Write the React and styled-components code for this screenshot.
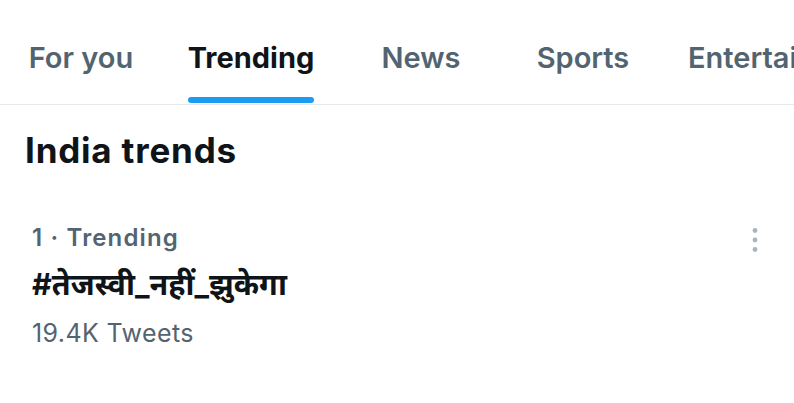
import styled, { createGlobalStyle } from 'styled-components'

const GlobalStyle = createGlobalStyle`
  * { box-sizing: border-box; }
  html, body {
    margin: 0;
    padding: 0;
    background: #ffffff;
    font-family: Inter, "Noto Sans", "Noto Sans Devanagari", sans-serif;
  }
`

// tab widths follow the reference spacing, label centred in each
const tabs = [
  { label: 'For you', width: 162 },
  { label: 'Trending', width: 178, active: true },
  { label: 'News', width: 162 },
  { label: 'Sports', width: 162 },
  { label: 'Entertainment' },
]

function App() {
  return (
    <>
      <GlobalStyle />
      <Page>
        <TabBar>
          {tabs.map((t) => (
            <Tab key={t.label} $width={t.width}>
              <TabInner>
                <TabLabel $active={t.active}>{t.label}</TabLabel>
                {t.active && <Indicator />}
              </TabInner>
            </Tab>
          ))}
        </TabBar>
        <Heading>India trends</Heading>
        <Trend>
          <TrendBody>
            <Meta>1 · Trending</Meta>
            <Tag>#तेजस्वी_नहीं_झुकेगा</Tag>
            <Count>19.4K Tweets</Count>
          </TrendBody>
          <MoreButton aria-label="More">
            <svg width="8" height="28" viewBox="0 0 8 28">
              <circle cx="4" cy="4.5" r="2.4" fill="#aab4bd" />
              <circle cx="4" cy="14" r="2.4" fill="#aab4bd" />
              <circle cx="4" cy="23.5" r="2.4" fill="#aab4bd" />
            </svg>
          </MoreButton>
        </Trend>
      </Page>
    </>
  )
}

const Page = styled.main`
  width: 794px;
  height: 403px;
  overflow: hidden;
  background: #fff;
`

const TabBar = styled.nav`
  display: flex;
  height: 105px;
  border-bottom: 1px solid #e6eaed;
  white-space: nowrap;
  overflow: hidden;
`

const Tab = styled.div`
  flex: 0 0 ${({ $width }) => ($width ? `${$width}px` : 'auto')};
  display: flex;
  justify-content: center;
  padding: ${({ $width }) => ($width ? '0' : '0 24px')};
  height: 100%;
`

const TabInner = styled.div`
  display: flex;
  flex-direction: column;
  padding-top: 38px;
  height: 100%;
`

const TabLabel = styled.span`
  font-size: 29px;
  line-height: 40px;
  font-weight: ${({ $active }) => ($active ? 700 : 600)};
  color: ${({ $active }) => ($active ? '#0f1419' : '#536471')};
`

const Indicator = styled.div`
  margin-top: auto;
  margin-bottom: 1px;
  height: 6px;
  border-radius: 3px;
  background: #1d9bf0;
`

const Heading = styled.h2`
  margin: 0;
  padding: 23px 0 0 25px;
  font-size: 35px;
  line-height: 44px;
  letter-spacing: 0.8px;
  font-weight: 700;
  color: #0f1419;
`

const Trend = styled.section`
  display: flex;
  justify-content: space-between;
  padding: 49px 35px 0 32px;
`

const TrendBody = styled.div`
  display: flex;
  flex-direction: column;
`

const Meta = styled.span`
  font-size: 24px;
  line-height: 34px;
  letter-spacing: 1.15px;
  font-weight: 600;
  color: #536471;
`

const Tag = styled.span`
  margin-top: 2px;
  font-size: 30.5px;
  line-height: 54px;
  font-weight: 700;
  color: #0f1419;
`

const Count = styled.span`
  margin-top: 4px;
  font-size: 25px;
  line-height: 36px;
  letter-spacing: 0.4px;
  color: #536471;
`

const MoreButton = styled.button`
  border: 0;
  background: none;
  padding: 0;
  height: 28px;
  margin-top: 5px;
  display: flex;
`

export default App
